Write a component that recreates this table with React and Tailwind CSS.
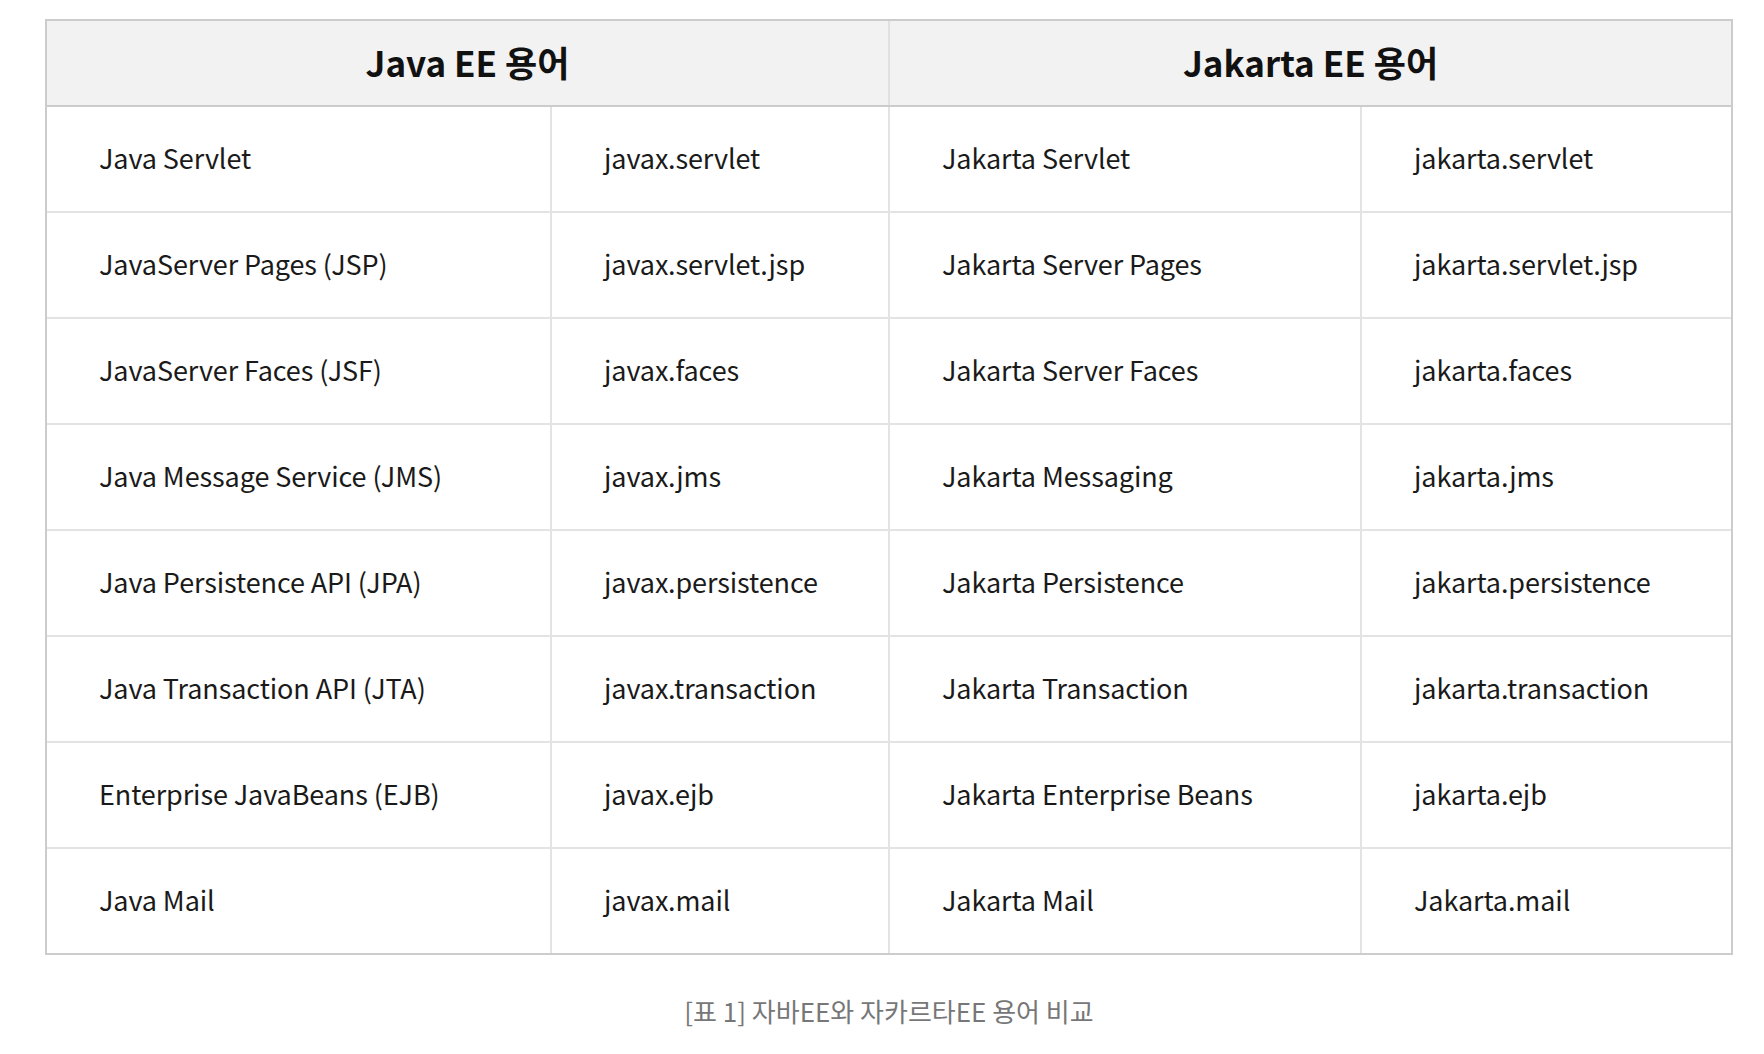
const rows = [
  ['Java Servlet', 'javax.servlet', 'Jakarta Servlet', 'jakarta.servlet'],
  ['JavaServer Pages (JSP)', 'javax.servlet.jsp', 'Jakarta Server Pages', 'jakarta.servlet.jsp'],
  ['JavaServer Faces (JSF)', 'javax.faces', 'Jakarta Server Faces', 'jakarta.faces'],
  ['Java Message Service (JMS)', 'javax.jms', 'Jakarta Messaging', 'jakarta.jms'],
  ['Java Persistence API (JPA)', 'javax.persistence', 'Jakarta Persistence', 'jakarta.persistence'],
  ['Java Transaction API (JTA)', 'javax.transaction', 'Jakarta Transaction', 'jakarta.transaction'],
  ['Enterprise JavaBeans (EJB)', 'javax.ejb', 'Jakarta Enterprise Beans', 'jakarta.ejb'],
  ['Java Mail', 'javax.mail', 'Jakarta Mail', 'Jakarta.mail'],
]

const colWidths = ['w-[505px] border-r-2', 'w-[338px] border-r-2', 'w-[472px] border-r-2', 'w-[369px]']

export default function App() {
  return (
    <div className="min-h-screen bg-white pl-[45px] pt-[19px] font-['Noto_Sans_CJK_KR','Noto_Sans',sans-serif]">
      <div className="w-[1688px] border-2 border-[#cccccc]">
        <div className="flex h-[86px] border-b-2 border-[#cccccc] bg-[#f2f2f2] text-[35px] font-bold text-[#111]">
          <div className="flex w-[843px] items-center justify-center border-r-2 border-[#e0e0e0] pb-[2px]">Java EE 용어</div>
          <div className="flex w-[841px] items-center justify-center pb-[2px]">Jakarta EE 용어</div>
        </div>
        {rows.map((row, i) => (
          <div key={i} className={`flex ${i < rows.length - 1 ? 'h-[106px] border-b-2' : 'h-[104px]'} border-[#e3e3e3]`}>
            {row.map((cell, j) => (
              <div key={j} className={`${colWidths[j]} flex items-center border-[#e3e3e3] pb-[2px] pl-[52px] text-[27px] tracking-[-0.1px] text-[#1a1a1a]`}>
                {cell}
              </div>
            ))}
          </div>
        ))}
      </div>
      <p className="mt-[36px] w-[1688px] text-center text-[26px] text-[#777]">[표 1] 자바EE와 자카르타EE 용어 비교</p>
    </div>
  )
}
